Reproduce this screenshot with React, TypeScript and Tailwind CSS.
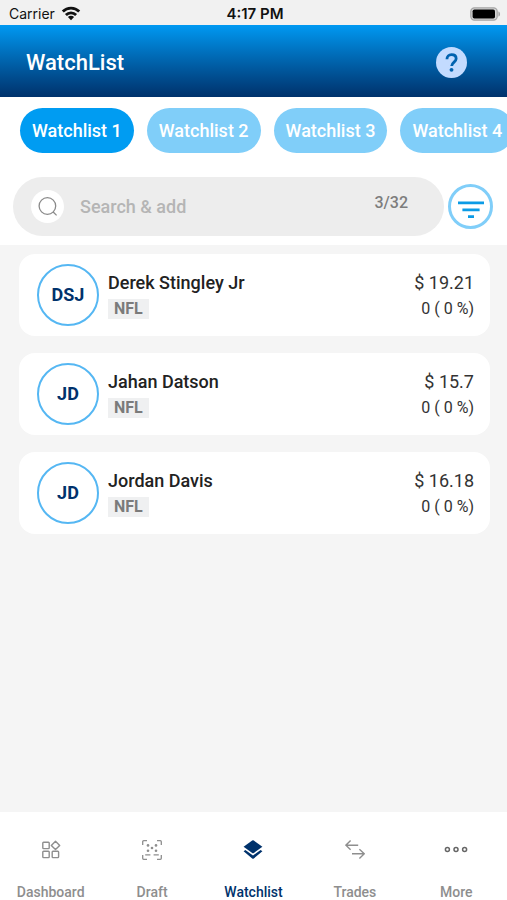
import { useState } from "react";
import clsx from "clsx";

const watchlists = ["Watchlist 1", "Watchlist 2", "Watchlist 3", "Watchlist 4"];

const players = [
  { initials: "DSJ", name: "Derek Stingley Jr", league: "NFL", price: "19.21", change: "0 ( 0 %)" },
  { initials: "JD", name: "Jahan Datson", league: "NFL", price: "15.7", change: "0 ( 0 %)" },
  { initials: "JD", name: "Jordan Davis", league: "NFL", price: "16.18", change: "0 ( 0 %)" },
];

function WifiIcon() {
  return (
    <svg viewBox="0 0 20 15" className="h-[15px] w-5" fill="none" stroke="#111" strokeWidth="2.8" aria-hidden="true">
      <path d="M1.8 5.6a11.6 11.6 0 0 1 16.4 0" />
      <path d="M4.9 8.9a7.2 7.2 0 0 1 10.2 0" />
      <path d="M10 14.2 6.9 11a4.4 4.4 0 0 1 6.2 0z" fill="#111" stroke="none" />
    </svg>
  );
}

function BatteryIcon() {
  return (
    <svg viewBox="0 0 31 14" className="h-3.5 w-[31px]" aria-hidden="true">
      <rect x="0.8" y="0.8" width="26.4" height="12.4" rx="3.6" fill="#d4d4d4" stroke="#a5a5a5" strokeWidth="1.2" />
      <rect x="2.6" y="2.4" width="22.4" height="9.2" rx="1.8" fill="#000" />
      <path d="M28.4 4.4c2.2.6 2.2 4.6 0 5.2z" fill="#a5a5a5" />
    </svg>
  );
}

function DashboardIcon() {
  return (
    <svg viewBox="0 0 20 20" className="size-5" fill="none" stroke="currentColor" strokeWidth="1.4" aria-hidden="true">
      <rect x="1.8" y="2.2" width="6.4" height="6.4" rx="0.8" />
      <rect x="1.8" y="11.2" width="6.4" height="6.4" rx="0.8" />
      <rect x="11.2" y="11.2" width="6.4" height="6.4" rx="0.8" />
      <path d="m14.5 1.2 4.2 4.2-4.2 4.2-4.2-4.2z" strokeLinejoin="round" />
    </svg>
  );
}

function DraftIcon() {
  return (
    <svg viewBox="0 0 20 20" className="size-5" fill="none" stroke="currentColor" strokeWidth="1.3" aria-hidden="true">
      <path d="M.7 5V1.7a1 1 0 0 1 1-1H5M15 .7h3.3a1 1 0 0 1 1 1V5M19.3 15v3.3a1 1 0 0 1-1 1H15M5 19.3H1.7a1 1 0 0 1-1-1V15" />
      <path d="M3.2 14.8h5.2M11.6 14.8h5.2" />
      <g fill="currentColor" stroke="none">
        <circle cx="6" cy="5.4" r="1.3" />
        <circle cx="14" cy="5.4" r="1.3" />
        <circle cx="10" cy="8" r="1.3" />
        <circle cx="6" cy="10.8" r="1.3" />
        <circle cx="14" cy="10.8" r="1.3" />
      </g>
    </svg>
  );
}

function WatchlistIcon() {
  return (
    <svg viewBox="0 0 20 20" className="size-5" fill="currentColor" aria-hidden="true">
      <path d="M9.2.6a1.4 1.4 0 0 1 1.6 0l8.6 6.2-8.6 6.2a1.4 1.4 0 0 1-1.6 0L.6 6.8z" />
      <path d="m.6 11.3 1.8-1.3 7.6 5.4 7.6-5.4 1.8 1.3-8.6 7.2a1.4 1.4 0 0 1-1.6 0z" />
    </svg>
  );
}

function TradesIcon() {
  return (
    <svg viewBox="0 0 20 20" className="size-5" fill="none" stroke="currentColor" strokeWidth="1.4" aria-hidden="true">
      <path d="M5.6.6.9 5.2l4.7 4.6M.9 5.2h12.3" />
      <path d="m14.4 9.2 4.9 4.5-4.9 4.7M19.3 13.7H7" />
    </svg>
  );
}

function MoreIcon() {
  return (
    <svg viewBox="0 0 24 20" className="h-5 w-6" fill="none" stroke="#666" strokeWidth="1.5" aria-hidden="true">
      <circle cx="3.4" cy="9.4" r="2" />
      <circle cx="12" cy="9.4" r="2" />
      <circle cx="20.6" cy="9.4" r="2" />
    </svg>
  );
}

const navItems = [
  { label: "Dashboard", Icon: DashboardIcon },
  { label: "Draft", Icon: DraftIcon },
  { label: "Watchlist", Icon: WatchlistIcon },
  { label: "Trades", Icon: TradesIcon },
  { label: "More", Icon: MoreIcon },
];

function StatusBar() {
  return (
    <div className="grid h-[25px] grid-cols-3 items-center bg-[#f1f1f1] pt-0.5 pr-1.5 pl-[9px] font-['Inter',sans-serif] text-sm text-[#111]">
      <div className="flex items-center gap-1.5">
        <span>Carrier</span>
        <WifiIcon />
      </div>
      <span className="text-center text-[15px] leading-5 font-semibold">4:17 PM</span>
      <div className="flex justify-end">
        <BatteryIcon />
      </div>
    </div>
  );
}

function Header() {
  return (
    <header className="flex h-[72px] items-center justify-between bg-linear-to-b from-[#0099f2] to-[#00326c] pt-0.5 pr-10 pl-[26px]">
      <h1 className="text-[22px] font-medium text-white">WatchList</h1>
      <button
        type="button"
        aria-label="Help"
        className="flex size-[31px] items-center justify-center rounded-full bg-[#c3dbff] text-[#0062b0]"
      >
        <svg viewBox="0 0 32 32" className="size-[31px]" fill="none" aria-hidden="true">
          <path
            d="M11.3 12.6c0-2.8 1.9-4.7 4.7-4.7 2.9 0 4.8 1.7 4.8 4.2 0 3.3-4.6 3.7-4.6 7.5"
            stroke="currentColor"
            strokeWidth="2.9"
          />
          <circle cx="16" cy="23.6" r="2" fill="currentColor" />
        </svg>
      </button>
    </header>
  );
}

function PlayerCard({ player }: { player: (typeof players)[number] }) {
  return (
    <li className="flex h-[82px] items-center rounded-2xl bg-white pr-4 pl-[18px]">
      <div className="flex size-[62px] shrink-0 items-center justify-center rounded-full border-2 border-[#55b7f3] text-lg font-bold text-[#00326c]">
        {player.initials}
      </div>
      <div className="ml-[9px] flex flex-1 flex-col items-start gap-1">
        <span className="text-lg leading-6 font-medium text-[#222]">{player.name}</span>
        <span className="bg-[#eff0f1] px-1.5 text-base leading-5 font-bold text-[#7b7b7b]">{player.league}</span>
      </div>
      <div className="flex flex-col items-end gap-1 text-[#333]">
        <span className="text-lg leading-6">$ {player.price}</span>
        <span className="text-base leading-5">{player.change}</span>
      </div>
    </li>
  );
}

export default function App() {
  const [activeList, setActiveList] = useState("Watchlist 1");

  return (
    <div className="flex min-h-screen flex-col bg-[#f5f5f5] font-['Roboto',sans-serif]">
      <StatusBar />
      <Header />

      <section className="bg-white pt-[11px] pb-[9px]">
        <div className="flex gap-[13px] overflow-hidden pl-5">
          {watchlists.map((name) => (
            <button
              key={name}
              type="button"
              onClick={() => setActiveList(name)}
              className={clsx(
                "h-[45px] shrink-0 rounded-full px-3 text-lg font-medium text-white",
                name === activeList ? "bg-[#009cf2]" : "bg-[#80cef9]",
              )}
            >
              {name}
            </button>
          ))}
        </div>

        <div className="mt-6 flex items-center gap-1 pr-3.5 pl-[13px]">
          <label className="flex h-[59px] min-w-0 flex-1 items-center rounded-full bg-[#ededed] pr-9 pl-[18px]">
            <span className="flex size-[33px] shrink-0 items-center justify-center rounded-full bg-white">
              <svg viewBox="0 0 20 20" className="size-5" fill="none" stroke="#8a8a8a" strokeWidth="1.3" aria-hidden="true">
                <circle cx="9.4" cy="9" r="8.3" />
                <path d="m15.2 15 3.4 3.4" />
              </svg>
            </span>
            <input
              type="text"
              aria-label="Search & add"
              placeholder="Search & add"
              className="ml-4 min-w-0 flex-1 bg-transparent text-lg font-medium text-[#222] outline-none placeholder:text-[#b5b5b5]"
            />
            <span className="pb-2 text-base font-medium text-[#7d7d7d]">3/32</span>
          </label>
          <button
            type="button"
            aria-label="Filter"
            className="flex size-[45px] shrink-0 items-center justify-center rounded-full border-[3px] border-[#80cef9] text-[#0b9be6]"
          >
            <svg viewBox="0 0 26 22" className="h-[22px] w-[26px]" stroke="currentColor" strokeWidth="2.8" aria-hidden="true">
              <path d="M0 6.8h26M4.4 13.8h17.2M10 20.6h6" />
            </svg>
          </button>
        </div>
      </section>

      <main className="flex-1 pt-[9px] pr-[17px] pl-[19px]">
        <ul className="flex flex-col gap-[17px]">
          {players.map((player) => (
            <PlayerCard key={player.name} player={player} />
          ))}
        </ul>
      </main>

      <nav className="grid h-[88px] grid-cols-5 bg-white pt-7">
        {navItems.map(({ label, Icon }) => (
          <a
            key={label}
            href="#"
            className={clsx(
              "flex flex-col items-center gap-[22px] text-sm font-medium",
              label === "Watchlist" ? "text-[#00326c]" : "text-[#8e8e8e]",
            )}
          >
            <Icon />
            <span>{label}</span>
          </a>
        ))}
      </nav>
    </div>
  );
}
